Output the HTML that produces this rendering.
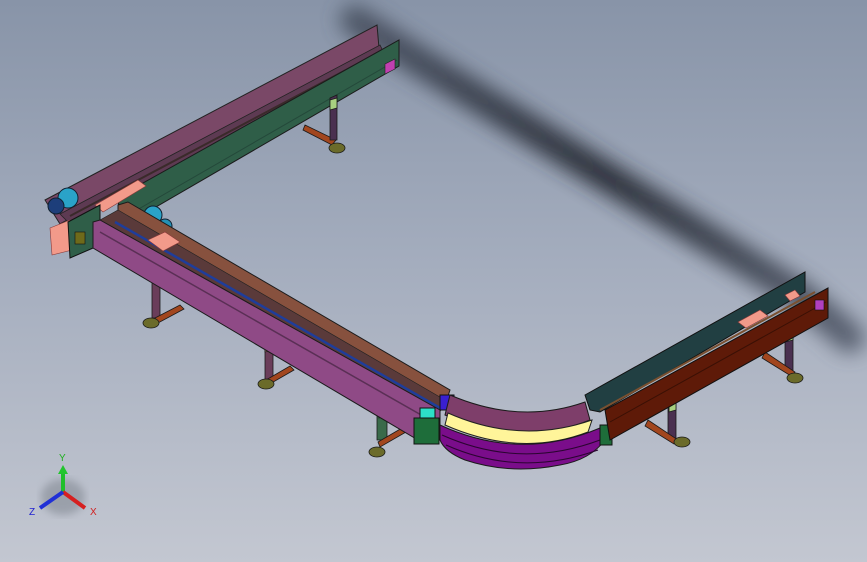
<!DOCTYPE html>
<html><head><meta charset="utf-8"><style>
html,body{margin:0;padding:0;width:867px;height:562px;overflow:hidden;}
body{background:linear-gradient(180deg,#8894a8 0%,#a3acbd 45%,#c3c7d1 100%);}
svg{position:absolute;left:0;top:0}
</style></head><body>
<svg width="867" height="562" viewBox="0 0 867 562" xmlns="http://www.w3.org/2000/svg">
<defs>
<filter id="b" x="-20%" y="-20%" width="140%" height="140%"><feGaussianBlur stdDeviation="10"/></filter>
<filter id="b2"><feGaussianBlur stdDeviation="4"/></filter>
<linearGradient id="sh" x1="0" y1="0" x2="1" y2="1"><stop offset="0" stop-color="#4a5262"/><stop offset="0.5" stop-color="#262a33"/><stop offset="1" stop-color="#555d6d"/></linearGradient>
</defs>
<!-- shadow -->
<path d="M355 20 L420 62 L620 185 L800 295 L850 338" stroke="url(#sh)" stroke-width="30" fill="none" stroke-linecap="round" filter="url(#b)" opacity="0.95"/>

<!-- upper arm: mauve back wall -->
<polygon points="45,200 377,25 379,48 60,224" fill="#7a4867" stroke="#222" stroke-width="1"/>
<polygon points="60,214 380,45 385,55 70,224" fill="#5d3a52" stroke="#222" stroke-width="0.8"/>
<line x1="70" y1="216" x2="378" y2="53" stroke="#3a2a2a" stroke-width="2"/>
<!-- green front wall -->
<polygon points="118,197 399,40 399,66 130,222 120,224" fill="#2f5e48" stroke="#1b1b1b" stroke-width="1"/>
<line x1="130" y1="214" x2="397" y2="60" stroke="#24483a" stroke-width="1"/>
<polygon points="385,64 395,59 395,69 385,74" fill="#c040b0" stroke="#222" stroke-width="0.6"/>
<!-- upper leg (in front) -->
<g stroke="#1a1a1a" stroke-width="0.8">
<polygon points="305,125 336,140 332,145 303,130" fill="#a2461e"/>
<polygon points="330,98 337,95 337,140 330,140" fill="#4a3050"/>
<polygon points="330,100 337,98 337,108 330,110" fill="#a8d080"/>
<ellipse cx="337" cy="148" rx="8" ry="5" fill="#6b6b2a"/>
</g>
<!-- pink slats upper -->
<g fill="#f29a8a" stroke="#8a3a3a" stroke-width="0.6">
<polygon points="95,205 138,180 146,186 103,212"/>
<polygon points="50,228 70,220 72,250 52,255"/>
</g>
<!-- motors -->
<circle cx="68" cy="198" r="10" fill="#2aa3c8" stroke="#102030"/>
<circle cx="56" cy="206" r="8" fill="#1d3e7a" stroke="#102030"/>
<circle cx="153" cy="215" r="9" fill="#2aa3c8" stroke="#102030"/>
<circle cx="165" cy="226" r="7" fill="#2590b5" stroke="#102030"/>
<!-- left end plates -->
<polygon points="68,222 100,205 100,245 70,258" fill="#2f5e48" stroke="#111"/>
<rect x="75" y="232" width="10" height="12" fill="#6e6a1a" stroke="#111" stroke-width="0.6"/>
<rect x="95" y="232" width="10" height="12" fill="#6e6a1a" stroke="#111" stroke-width="0.6"/>

<!-- lower arm legs -->
<g stroke="#1a1a1a" stroke-width="0.8">
<polygon points="152,272 160,270 160,318 152,318" fill="#6a3d5a"/><polygon points="152,272 160,270 160,280 152,282" fill="#f2a090"/>
<polygon points="155,318 180,305 184,309 158,323" fill="#a2461e"/>
<ellipse cx="151" cy="323" rx="8" ry="5" fill="#6b6b2a"/>
<polygon points="265,343 273,340 273,380 265,380" fill="#6a3d5a"/><polygon points="265,343 273,340 273,350 265,352" fill="#f2a090"/>
<polygon points="266,380 290,366 294,370 268,385" fill="#a2461e"/>
<ellipse cx="266" cy="384" rx="8" ry="5" fill="#6b6b2a"/>
<polygon points="377,400 387,397 387,440 377,440" fill="#3a6a4a"/><polygon points="379,408 386,405 386,415 379,418" fill="#f2a090"/>
<polygon points="378,442 402,428 406,432 380,447" fill="#a2461e"/>
<ellipse cx="377" cy="452" rx="8" ry="5" fill="#6b6b2a"/>
</g>
<!-- brown inner wall lower arm -->
<polygon points="118,205 128,202 450,390 445,405 118,218" fill="#87513e" stroke="#1b1b1b"/>
<polygon points="100,220 118,210 445,400 440,412" fill="#5a3a3a" stroke="#222" stroke-width="0.6"/>
<line x1="115" y1="222" x2="440" y2="408" stroke="#1f3d9a" stroke-width="2.5"/>
<g fill="#f29a8a" stroke="#8a3a3a" stroke-width="0.6">
<polygon points="148,240 165,232 180,242 163,251"/>
</g>
<!-- purple front wall lower arm -->
<polygon points="93,222 100,220 440,410 440,440 418,440 93,248" fill="#8f4a86" stroke="#1b1b1b"/>
<line x1="100" y1="232" x2="430" y2="420" stroke="#5a2f55" stroke-width="1.5"/>
<!-- junction -->
<rect x="440" y="395" width="14" height="15" fill="#3a1fd0" stroke="#111"/>
<rect x="420" y="408" width="15" height="28" fill="#2de0c8" stroke="#111"/>
<rect x="414" y="418" width="25" height="26" fill="#1e6d3a" stroke="#111"/>
<!-- curve -->
<path d="M450 395 Q520 425 585 402 L590 420 Q520 448 445 415 Z" fill="#7e3e6a" stroke="#1b1b1b"/>
<path d="M448 413 Q520 445 592 420 L588 432 Q520 458 445 425 Z" fill="#fff59a" stroke="#222"/>
<path d="M440 425 Q520 462 600 428 L605 440 Q590 460 560 465 Q510 475 465 460 Q445 452 440 440 Z" fill="#7a0d8a" stroke="#1b1b1b"/>
<path d="M442 435 Q520 470 600 440" stroke="#2a0530" fill="none"/>
<path d="M446 445 Q520 478 598 450" stroke="#2a0530" fill="none"/>
<rect x="600" y="425" width="12" height="20" fill="#1e6d3a" stroke="#111"/>

<!-- right arm legs -->
<g stroke="#1a1a1a" stroke-width="0.8">
<polygon points="668,400 676,397 676,440 668,440" fill="#4a3050"/><polygon points="669,402 676,400 676,410 669,412" fill="#a8d080"/>
<polygon points="648,420 678,440 674,444 645,426" fill="#a2461e"/>
<ellipse cx="682" cy="442" rx="8" ry="5" fill="#6b6b2a"/>
<polygon points="785,330 793,327 793,372 785,372" fill="#4a3050"/><polygon points="785,333 793,330 793,340 785,342" fill="#a8d080"/>
<polygon points="765,352 795,372 791,376 762,358" fill="#a2461e"/>
<ellipse cx="795" cy="378" rx="8" ry="5" fill="#6b6b2a"/>
</g>
<!-- right arm: teal back wall -->
<polygon points="585,395 805,272 805,292 600,412 590,410" fill="#213f42" stroke="#111"/>
<line x1="600" y1="410" x2="815" y2="292" stroke="#7a5030" stroke-width="2"/>
<g fill="#f29a8a" stroke="#8a3a3a" stroke-width="0.6">
<polygon points="738,322 760,310 768,316 746,328"/>
<polygon points="785,295 795,290 800,296 790,301"/>
</g>
<!-- brown-red front wall -->
<polygon points="605,410 828,288 828,318 610,440" fill="#5e1a08" stroke="#111"/>
<line x1="610" y1="422" x2="826" y2="302" stroke="#3a1005" stroke-width="1"/>
<rect x="815" y="300" width="9" height="10" fill="#b040c0" stroke="#111" stroke-width="0.6"/>

<!-- axis triad -->
<g>
<ellipse cx="63" cy="497" rx="22" ry="18" fill="#7f858f" opacity="0.55" filter="url(#b2)"/>
<line x1="63" y1="492" x2="63" y2="470" stroke="#1fbf2a" stroke-width="4"/>
<polygon points="58,474 68,474 63,465" fill="#22c52e"/>
<line x1="63" y1="492" x2="85" y2="508" stroke="#d62020" stroke-width="4"/>
<line x1="63" y1="492" x2="40" y2="508" stroke="#2030d6" stroke-width="4"/>
<text x="59" y="461" font-family="Liberation Sans, sans-serif" font-size="10" fill="#20b020">Y</text>
<text x="90" y="515" font-family="Liberation Sans, sans-serif" font-size="10" fill="#d02020">X</text>
<text x="29" y="515" font-family="Liberation Sans, sans-serif" font-size="10" fill="#2020d0">Z</text>
</g>
</svg>
</body></html>
